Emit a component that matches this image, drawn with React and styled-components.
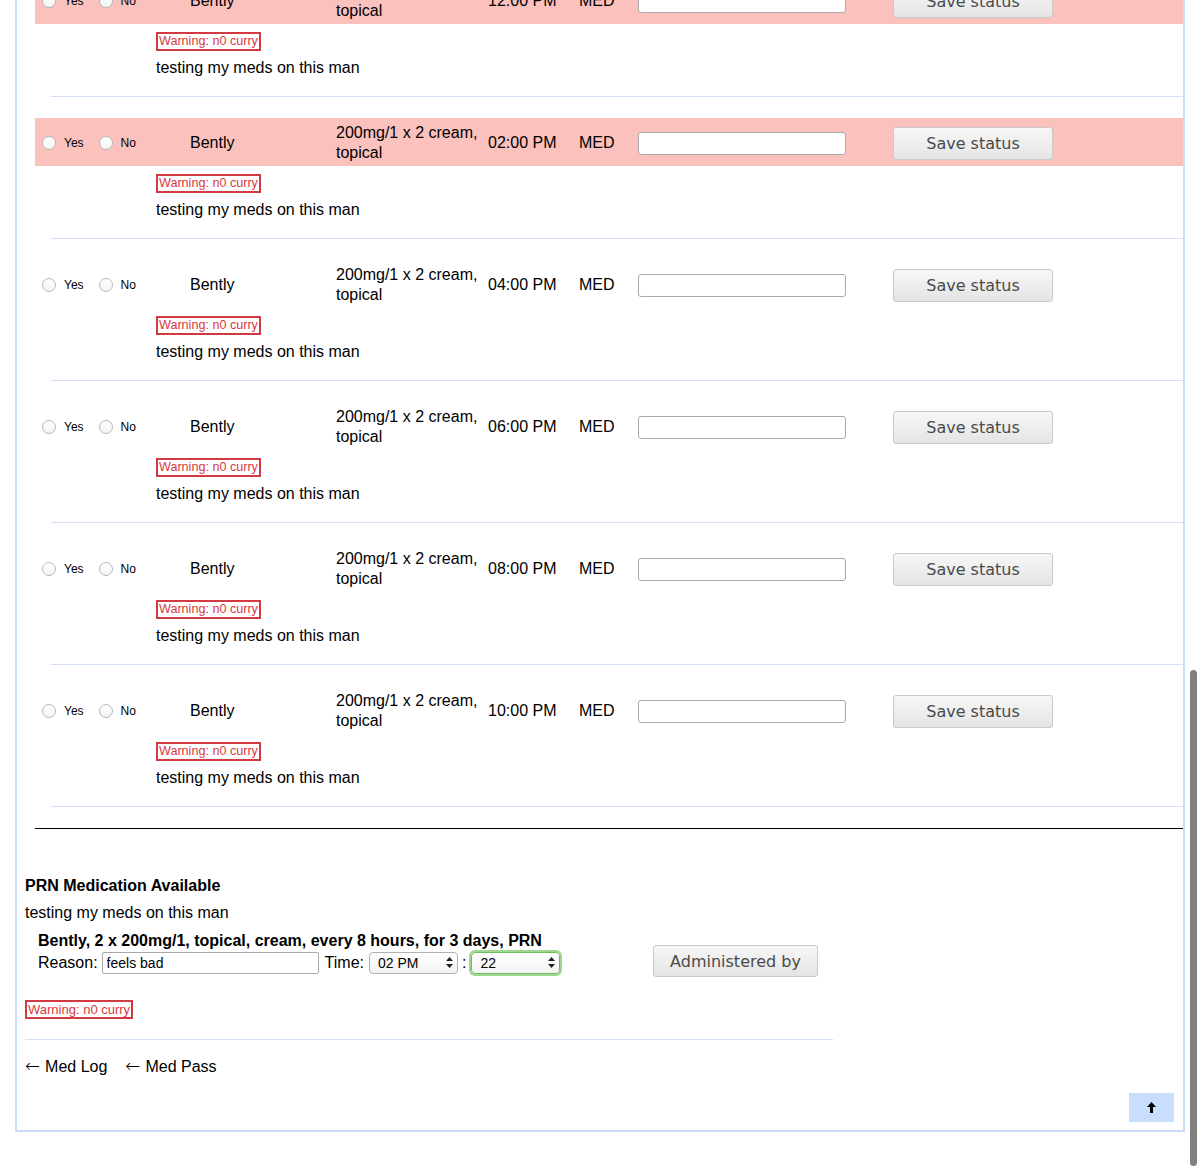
import React from "react";
import styled, { createGlobalStyle } from "styled-components";

const GlobalStyle = createGlobalStyle`
  html, body {
    margin: 0;
    padding: 0;
    background: #fff;
    overflow: hidden;
  }
  body {
    font-family: "Liberation Sans", Arial, sans-serif;
    font-size: 16px;
    color: #000;
  }
`;

const Page = styled.div`
  margin-top: -24px;
  padding: 0 15px;
`;

const Panel = styled.div`
  border: 2px solid #cbdcf8;
  border-top: none;
  padding-bottom: 8px;
`;

const Row = styled.div`
  display: grid;
  grid-template-columns: 155px 146px 152px 91px 59px 255px 160px;
  align-items: center;
  height: 48px;
  box-sizing: border-box;
  padding-top: 2px;
  margin-left: 18px;
  background: ${(p) => (p.$due ? "#fbc1bd" : "transparent")};
  line-height: 20px;
`;

const Choices = styled.div`
  display: flex;
  align-items: center;
  padding-left: 7px;
`;

const Radio = styled.input.attrs({ type: "radio" })`
  appearance: none;
  width: 14px;
  height: 14px;
  margin: 0 0 0 ${(p) => (p.$first ? 0 : 15)}px;
  border: 1px solid #b8b8b8;
  border-radius: 50%;
  background: linear-gradient(#fff, #f4f4f4);
  box-sizing: border-box;
`;

const ChoiceLabel = styled.span`
  font-size: 12px;
  margin-left: 8px;
`;

const Cell = styled.div`
  padding-right: ${(p) => p.$pad || 0}px;
`;

const StatusInput = styled.input`
  width: 208px;
  height: 23px;
  box-sizing: border-box;
  border: 1px solid #a9a9a9;
  border-radius: 3px;
  background: #fff;
  margin: 0;
`;

const Button = styled.button`
  width: ${(p) => p.$w}px;
  height: ${(p) => p.$h}px;
  margin: 0;
  padding: 0;
  border: 1px solid #c9c9c9;
  border-radius: 3px;
  background: linear-gradient(#f7f7f7 0%, #efefef 45%, #e4e4e4 100%);
  font-family: "DejaVu Sans", Verdana, sans-serif;
  font-size: 16px;
  color: #4a4a4a;
`;

const Notes = styled.div`
  padding-left: 139px;
  padding-top: 8px;
`;

const Warning = styled.div`
  width: fit-content;
  height: 19px;
  box-sizing: border-box;
  border: 2px solid #d23a41;
  padding: 0 ${(p) => p.$pad || 1}px;
  font-size: ${(p) => p.$size || 12.6}px;
  line-height: 15px;
  color: #d8393f;
`;

const NoteText = styled.div`
  margin-top: 7px;
  line-height: 20px;
`;

const Separator = styled.div`
  height: 1px;
  background: #d2dff4;
  margin: ${(p) => p.$before}px 0 ${(p) => p.$after}px ${(p) => p.$indent}px;
  width: ${(p) => (p.$width ? `${p.$width}px` : "auto")};
`;

const Rule = styled.div`
  height: 1px;
  background: #000;
  margin-left: 18px;
`;

const Prn = styled.div`
  padding: 47px 8px 0;
  line-height: 20px;
`;

const Heading = styled.div`
  font-weight: bold;
`;

const PrnText = styled.div`
  margin-top: 7px;
`;

const PrnItem = styled.div`
  display: flex;
  align-items: flex-end;
  margin-top: 8px;
  padding-left: 13px;
`;

const PrnForm = styled.div`
  width: 615px;
`;

const PrnTitle = styled.div`
  font-weight: bold;
`;

const ReasonRow = styled.div`
  display: flex;
  align-items: center;
  height: 22px;
  margin-top: 1px;
`;

const ReasonInput = styled.input`
  width: 217px;
  height: 22px;
  box-sizing: border-box;
  margin: 0 6px 0 4px;
  border: 1px solid #a9a9a9;
  border-radius: 2px;
  padding: 0 4px;
  font-family: "Liberation Sans", Arial, sans-serif;
  font-size: 14px;
  color: #000;
`;

const SelectWrap = styled.div`
  position: relative;
  margin-left: ${(p) => p.$ml}px;
`;

const Select = styled.select`
  appearance: none;
  width: 89px;
  height: 22px;
  box-sizing: border-box;
  margin: 0;
  padding: 0 0 0 8px;
  border: 1px solid ${(p) => (p.$focus ? "#6cbd5d" : "#b1b1b1")};
  border-radius: 4px;
  background: linear-gradient(#fff, #f3f3f3);
  box-shadow: ${(p) => (p.$focus ? "0 0 0 2px rgba(125, 200, 110, 0.75)" : "none")};
  font-family: "Liberation Sans", Arial, sans-serif;
  font-size: 14px;
  color: #000;
  outline: none;
`;

const Arrows = styled.svg`
  position: absolute;
  right: 5px;
  top: 5px;
  pointer-events: none;
`;

const Colon = styled.span`
  margin-left: 4px;
`;

const SubmitCell = styled.div`
  margin-bottom: -3px;
`;

const LowerWarning = styled.div`
  margin-top: 26px;
`;

const Links = styled.div`
  display: flex;
  gap: 18px;
  line-height: 20px;
`;

const LinkItem = styled.span`
  color: #000;
`;

const ArrowGlyph = styled.span`
  font-family: "DejaVu Sans", sans-serif;
  font-weight: 200;
  font-size: 18px;
  margin-right: 5px;
`;

const TopRow = styled.div`
  display: flex;
  justify-content: flex-end;
  padding-right: 9px;
  margin-top: 16px;
`;

const TopButton = styled.div`
  width: 45px;
  height: 29px;
  background: #c9defc;
  display: flex;
  align-items: center;
  justify-content: center;
`;

const ScrollThumb = styled.div`
  position: fixed;
  left: 1190px;
  top: 670px;
  width: 7px;
  height: 496px;
  border-radius: 4px;
  background: #808080;
`;

const times = ["12:00 PM", "02:00 PM", "04:00 PM", "06:00 PM", "08:00 PM", "10:00 PM"];

const SelectArrows = () => (
  <Arrows width="7" height="11" viewBox="0 0 7 11">
    <path d="M3.5 0 L7 4 H0 Z" fill="#222" />
    <path d="M3.5 11 L7 7 H0 Z" fill="#222" />
  </Arrows>
);

const MedBlock = ({ time, due }) => (
  <>
    <Row $due={due}>
      <Choices>
        <Radio $first name={time} />
        <ChoiceLabel>Yes</ChoiceLabel>
        <Radio name={time} />
        <ChoiceLabel>No</ChoiceLabel>
      </Choices>
      <Cell>Bently</Cell>
      <Cell $pad={6}>200mg/1 x 2 cream, topical</Cell>
      <Cell>{time}</Cell>
      <Cell>MED</Cell>
      <Cell>
        <StatusInput type="text" />
      </Cell>
      <Cell>
        <Button $w={160} $h={33}>Save status</Button>
      </Cell>
    </Row>
    <Notes>
      <Warning>Warning: n0 curry</Warning>
      <NoteText>testing my meds on this man</NoteText>
    </Notes>
    <Separator $indent={34} $before={18} $after={21} />
  </>
);

export default function App() {
  return (
    <>
      <GlobalStyle />
      <Page>
        <Panel>
          {times.map((t, i) => (
            <MedBlock key={t} time={t} due={i < 2} />
          ))}
          <Rule />
          <Prn>
            <Heading>PRN Medication Available</Heading>
            <PrnText>testing my meds on this man</PrnText>
            <PrnItem>
              <PrnForm>
                <PrnTitle>
                  Bently, 2 x 200mg/1, topical, cream, every 8 hours, for 3 days, PRN
                </PrnTitle>
                <ReasonRow>
                  <span>Reason:</span>
                  <ReasonInput type="text" defaultValue="feels bad" />
                  <span>Time:</span>
                  <SelectWrap $ml={5}>
                    <Select defaultValue="02 PM">
                      <option>02 PM</option>
                    </Select>
                    <SelectArrows />
                  </SelectWrap>
                  <Colon>:</Colon>
                  <SelectWrap $ml={5}>
                    <Select $focus defaultValue="22">
                      <option>22</option>
                    </Select>
                    <SelectArrows />
                  </SelectWrap>
                </ReasonRow>
              </PrnForm>
              <SubmitCell>
                <Button $w={165} $h={32}>Administered by</Button>
              </SubmitCell>
            </PrnItem>
            <LowerWarning>
              <Warning $size={13} $pad={1}>Warning: n0 curry</Warning>
            </LowerWarning>
            <Separator $indent={0} $width={808} $before={20} $after={16} />
            <Links>
              <LinkItem>
                <ArrowGlyph>←</ArrowGlyph>Med Log
              </LinkItem>
              <LinkItem>
                <ArrowGlyph>←</ArrowGlyph>Med Pass
              </LinkItem>
            </Links>
          </Prn>
          <TopRow>
            <TopButton>
              <svg width="9" height="11" viewBox="0 0 9 11">
                <path d="M4.5 0 L9 5 H6 V11 H3 V5 H0 Z" fill="#000" />
              </svg>
            </TopButton>
          </TopRow>
        </Panel>
      </Page>
      <ScrollThumb />
    </>
  );
}
